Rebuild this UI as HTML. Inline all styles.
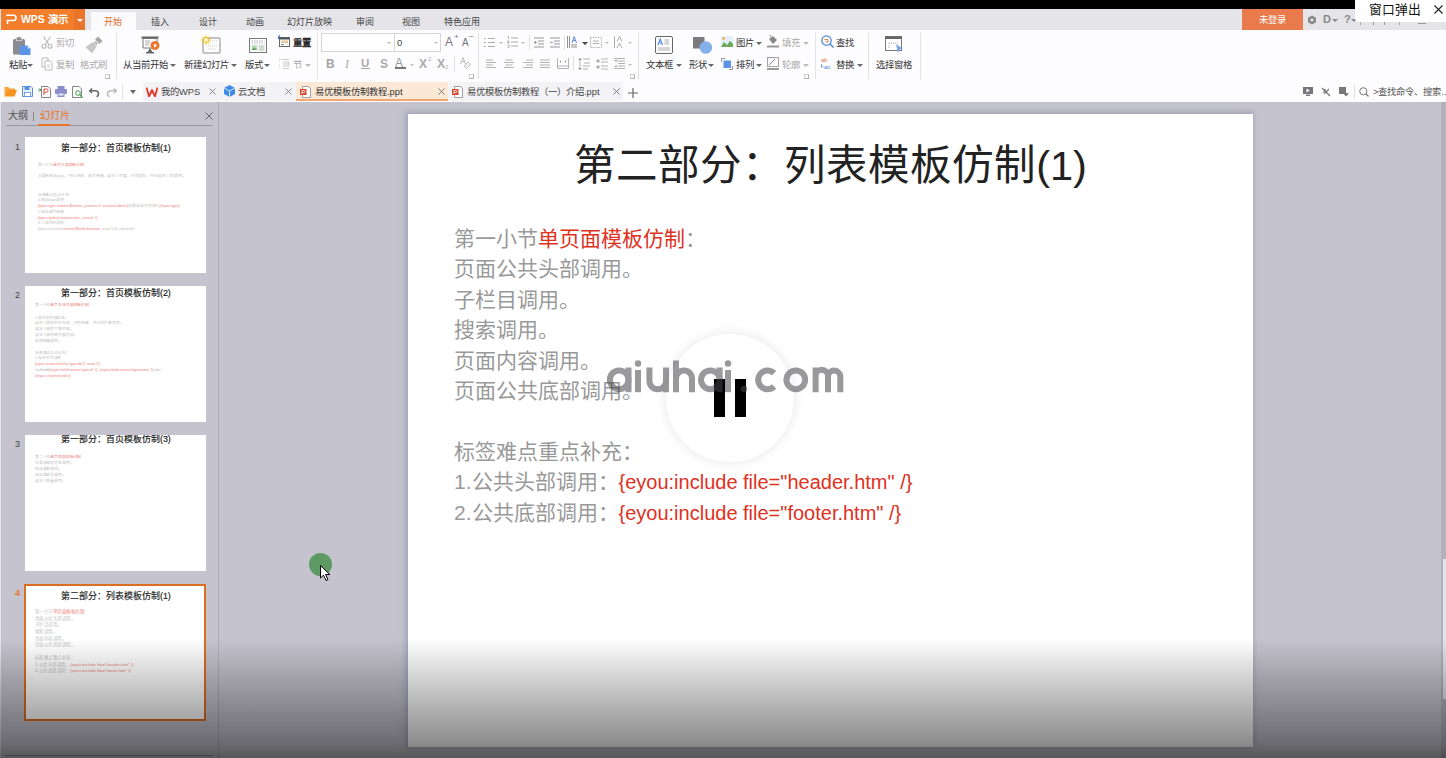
<!DOCTYPE html>
<html lang="zh-CN"><head><meta charset="utf-8">
<style>
*{margin:0;padding:0;box-sizing:border-box}
html,body{width:1446px;height:758px;overflow:hidden;background:#c5c3cd;font-family:"Liberation Sans",sans-serif;position:relative}
.a{position:absolute}
.t{position:absolute;white-space:nowrap;line-height:1}
#topbar{left:0;top:0;width:1446px;height:9px;background:#000}
#tabrow{left:0;top:9px;width:1446px;height:21px;background:#e5e4e8}
#ribbon{left:0;top:30px;width:1446px;height:52px;background:#fdfcfe}
#docrow{left:0;top:82px;width:1446px;height:20px;background:#fdfcfe}
.tab{font-size:9px;color:#444;top:18px}
.rt{font-size:9.4px;color:#333}
.dis{color:#aaa}
.sep{position:absolute;width:1px;background:#e2e1e6}
.arr{position:absolute;width:0;height:0;border-left:3px solid transparent;border-right:3px solid transparent;border-top:3px solid #666}
.arr.l{border-top-color:#bbb}
.launch{position:absolute;width:5px;height:5px;border:1px solid #cfcfcf;border-right-color:#b0b0b0;border-bottom-color:#b0b0b0}
.th .ttl{-webkit-text-stroke:0.7px #111}
.th .t:not(.ttl){opacity:.62}
</style></head><body>
<div id="topbar" class="a"></div>
<div id="tabrow" class="a"></div>
<div id="ribbon" class="a"></div>
<div id="docrow" class="a"></div>
<!-- WPS orange button -->
<div class="a" style="left:1px;top:9px;width:73px;height:21px;background:#f27d2a"></div>
<div class="a" style="left:74px;top:9px;width:11px;height:21px;background:#e8752a"></div>
<svg class="a" style="left:5px;top:14px" width="12" height="11" viewBox="0 0 12 11"><path d="M1 1.2H8.5Q11 1.2 11 4Q11 6.5 8.5 6.5H2.5V10" fill="none" stroke="#fff" stroke-width="1.6"/></svg>
<div class="t" style="left:21px;top:14.5px;font-size:10.4px;font-weight:bold;color:#fff">WPS 演示</div>
<div class="arr" style="left:77px;top:19px;border-top-color:#fff;border-left-width:3px;border-right-width:3px"></div>
<!-- active tab -->
<div class="a" style="left:91px;top:12px;width:45px;height:18px;background:#fbfbfd"></div>
<div class="t tab" style="left:104px;color:#e2691f">开始</div>
<div class="t tab" style="left:151px">插入</div>
<div class="t tab" style="left:199px">设计</div>
<div class="t tab" style="left:246px">动画</div>
<div class="t tab" style="left:287px">幻灯片放映</div>
<div class="t tab" style="left:356px">审阅</div>
<div class="t tab" style="left:402px">视图</div>
<div class="t tab" style="left:444px">特色应用</div>
<!-- right side -->
<div class="a" style="left:1242px;top:9px;width:61px;height:21px;background:#e97a4c"></div>
<div class="t" style="left:1259px;top:15.5px;font-size:9.3px;color:#fff">未登录</div>
<svg class="a" style="left:1307px;top:15px" width="10" height="10" viewBox="0 0 10 10"><path d="M5 0.5L9 2.7V7.3L5 9.5L1 7.3V2.7Z" fill="#888"/><circle cx="5" cy="5" r="1.6" fill="#e5e4e8"/></svg>
<div class="t" style="left:1323px;top:14px;font-size:11px;font-weight:bold;color:#888">D</div>
<div class="arr" style="left:1332px;top:19px;border-top-color:#888"></div>
<div class="t" style="left:1344px;top:14px;font-size:11px;font-weight:bold;color:#888">?</div>
<div class="arr" style="left:1351px;top:19px;border-top-color:#888"></div>
<!-- remnant -->
<div class="a" style="left:1360px;top:22px;width:1px;height:3px;background:#aaa"></div><div class="a" style="left:1373px;top:21px;width:12px;height:4px;border:1px solid #999;border-bottom:none"></div><div class="a" style="left:1399px;top:22px;width:1px;height:3px;background:#aaa"></div><div class="a" style="left:1418px;top:23px;width:8px;height:1px;background:#999"></div>
<!-- popup -->
<div class="a" style="left:1355px;top:0;width:91px;height:22px;background:#fff;border-bottom-left-radius:4px"></div>
<div class="t" style="left:1369px;top:3.5px;font-size:12.8px;color:#111">窗口弹出</div>
<svg class="a" style="left:1434px;top:5px" width="9" height="9" viewBox="0 0 9 9"><path d="M0.5 0.5L8.5 8.5M8.5 0.5L0.5 8.5" stroke="#222" stroke-width="1.1"/></svg>
<!-- group clipboard -->
<svg class="a" style="left:12px;top:36px" width="20" height="20" viewBox="0 0 20 20">
<path d="M1 4.5Q1 3 2.5 3H4V5H10V3H11.5Q13 3 13 4.5V18.5H1Z" fill="#8c8c90"/><path d="M4.5 1.5H6L7 0.5L8 1.5H9.5V4.5H4.5Z" fill="#8c8c90"/>
<path d="M7.5 9.5H15.5L18.5 12.5V19H7.5Z" fill="#5b94e6"/><path d="M15.5 9.5V12.5H18.5Z" fill="#d0e0f8"/></svg>
<div class="t rt" style="left:9px;top:60px">粘贴</div><div class="arr" style="left:27px;top:64px"></div>
<svg class="a" style="left:41px;top:36px" width="12" height="13" viewBox="0 0 12 13"><path d="M2.5 0.5L8 9M9.5 0.5L4 9" stroke="#bbb" stroke-width="1.1" fill="none"/><circle cx="3" cy="10.3" r="2" fill="none" stroke="#bbb" stroke-width="1.1"/><circle cx="9" cy="10.3" r="2" fill="none" stroke="#bbb" stroke-width="1.1"/></svg>
<div class="t rt dis" style="left:56px;top:38px">剪切</div>
<svg class="a" style="left:41px;top:57px" width="12" height="14" viewBox="0 0 12 14"><path d="M1 1H7V10H1Z" fill="none" stroke="#bbb" stroke-width="1"/><path d="M4 4H9L11 6V13H4Z" fill="#fff" stroke="#bbb" stroke-width="1"/><path d="M6 8H9M6 10H9" stroke="#bbb" stroke-width="0.8"/></svg>
<div class="t rt dis" style="left:56px;top:60px">复制</div>
<svg class="a" style="left:85px;top:36px" width="18" height="18" viewBox="0 0 18 18"><path d="M13 0.5L17.5 5L14.5 8L10 3.5Z" fill="#a8a8a8"/><path d="M10.5 5L13 7.5L11.5 9L9 6.5Z" fill="#b5b5b5"/><path d="M8 6L12 10L7 17.5L0.5 11Z" fill="#c6c6c6"/></svg>
<div class="t rt dis" style="left:80px;top:60px">格式刷</div>
<div class="launch" style="left:105px;top:74px"></div>
<div class="sep" style="left:116px;top:33px;height:46px"></div>
<!-- group slides -->
<svg class="a" style="left:141px;top:36px" width="20" height="19" viewBox="0 0 20 19"><rect x="0.5" y="0.5" width="17" height="2" fill="#666"/><path d="M2 2.5H16V12H2Z" fill="#fff" stroke="#777" stroke-width="1"/><path d="M4 5H9M4 7H9M4 9H8" stroke="#999" stroke-width="0.8"/><path d="M9 12L6 17H12L9 12" fill="#666"/><rect x="5" y="16" width="8" height="1.5" fill="#666"/><circle cx="14" cy="9.5" r="4.5" fill="#ec7a33"/><path d="M13 7.5L16 9.5L13 11.5Z" fill="#fff"/></svg>
<div class="t rt" style="left:123px;top:60px">从当前开始</div><div class="arr" style="left:170px;top:64px"></div>
<svg class="a" style="left:201px;top:35px" width="20" height="19" viewBox="0 0 20 19"><rect x="2" y="3" width="17" height="15" rx="1" fill="#fff" stroke="#888" stroke-width="1"/><path d="M9 6H17M5 11H17M7 14H15" stroke="#bbb" stroke-width="0.8" stroke-dasharray="1 1"/><circle cx="5" cy="5" r="3" fill="#f6c21c"/><path d="M5 0V10M0 5H10M1.5 1.5L8.5 8.5M8.5 1.5L1.5 8.5" stroke="#f6c21c" stroke-width="0.9"/><circle cx="5" cy="5" r="2" fill="#fff8d0"/></svg>
<div class="t rt" style="left:184px;top:60px">新建幻灯片</div><div class="arr" style="left:231px;top:64px"></div>
<svg class="a" style="left:249px;top:38px" width="18" height="15" viewBox="0 0 18 15"><rect x="0.5" y="0.5" width="17" height="14" fill="#fff" stroke="#777" stroke-width="1"/><path d="M2.5 3H15.5M2.5 5H15.5" stroke="#999" stroke-width="0.8" stroke-dasharray="1.5 1"/><rect x="2.5" y="7" width="6" height="5" fill="#c5e0c0"/><path d="M2.5 12L5 9L8.5 12Z" fill="#6aa76a"/><path d="M10 8H15.5M10 10H15.5M10 12H15.5" stroke="#999" stroke-width="0.8"/></svg>
<div class="t rt" style="left:245px;top:60px">版式</div><div class="arr" style="left:264px;top:64px"></div>
<svg class="a" style="left:278px;top:35px" width="12" height="12" viewBox="0 0 12 12"><rect x="1.5" y="2.5" width="10" height="9" fill="#fff" stroke="#666" stroke-width="1"/><rect x="1.5" y="2.5" width="10" height="2" fill="#555"/><rect x="3" y="5.5" width="7" height="2.5" fill="#e8c9a0"/><path d="M3 9.5H6" stroke="#888"/><path d="M2 0.5Q0 1.5 0.5 4" stroke="#3a78d4" stroke-width="1.2" fill="none"/></svg>
<div class="t rt" style="left:293px;top:38px;color:#222;-webkit-text-stroke:0.3px #222">重置</div>
<svg class="a" style="left:278px;top:58px" width="12" height="12" viewBox="0 0 12 12"><path d="M3 1.5H11M5 6H11M5 10.5H11M1 1.5H2M1 4H2M1 6.5H2M1 9H2" stroke="#ccc" stroke-width="1.2"/><path d="M5 4H11V8H5" fill="none" stroke="#ccc" stroke-width="1"/></svg>
<div class="t rt dis" style="left:293px;top:60px">节</div><div class="arr l" style="left:305px;top:64px"></div>
<div class="sep" style="left:317px;top:33px;height:46px"></div>
<!-- group font -->
<div class="a" style="left:321px;top:33px;width:74px;height:19px;border:1px solid #d6d5da;background:#fff"></div>
<div class="a" style="left:394px;top:33px;width:47px;height:19px;border:1px solid #d6d5da;background:#fff"></div>
<div class="arr l" style="left:387px;top:42px;border-left-width:2.5px;border-right-width:2.5px;border-top-width:2.5px"></div>
<div class="arr l" style="left:434px;top:42px;border-left-width:2.5px;border-right-width:2.5px;border-top-width:2.5px"></div>
<div class="t" style="left:397px;top:38px;font-size:9.5px;color:#444">0</div>
<div class="t" style="left:445px;top:36px;font-size:12px;color:#777">A</div><div class="t" style="left:454px;top:33px;font-size:8px;color:#777">+</div>
<div class="t" style="left:462px;top:38px;font-size:10px;color:#777">A</div><div class="t" style="left:469px;top:33px;font-size:8px;color:#777">−</div>
<div class="t" style="left:326px;top:58px;font-size:12px;font-weight:bold;color:#a5a5a5">B</div>
<div class="t" style="left:345px;top:58px;font-size:12px;font-style:italic;color:#aaa;font-family:'Liberation Serif',serif">I</div>
<div class="t" style="left:361px;top:58px;font-size:11.5px;font-weight:bold;color:#aaa">U</div><div class="a" style="left:361px;top:68px;width:9px;height:1px;background:#aaa"></div>
<div class="t" style="left:380px;top:58px;font-size:12px;font-weight:bold;color:#aaa">S</div>
<div class="t" style="left:395px;top:57px;font-size:12px;color:#999">A</div><div class="a" style="left:395px;top:67px;width:11px;height:2px;background:#777"></div>
<div class="arr l" style="left:410px;top:64px;border-left-width:2.5px;border-right-width:2.5px;border-top-width:2.5px"></div>
<div class="t" style="left:419px;top:58px;font-size:12px;font-weight:bold;color:#aaa">X</div><div class="t" style="left:428px;top:56px;font-size:6px;color:#aaa">2</div>
<div class="t" style="left:437px;top:58px;font-size:12px;font-weight:bold;color:#aaa">X</div><div class="t" style="left:445px;top:64px;font-size:6px;color:#aaa">2</div>
<div class="sep" style="left:454px;top:56px;height:15px"></div>
<svg class="a" style="left:460px;top:57px" width="11" height="12" viewBox="0 0 11 12"><path d="M0.5 7L3 0.5L5.5 7M1.5 4.5H4.5" stroke="#bbb" fill="none" stroke-width="1"/><path d="M4 9L8 5L10.5 7.5L6.5 11.5Z" fill="#eee" stroke="#bbb" stroke-width="0.8"/></svg>
<div class="launch" style="left:469px;top:74px"></div>
<div class="sep" style="left:478px;top:33px;height:46px"></div>
<!-- paragraph group row1 -->
<svg class="a" style="left:484px;top:37px" width="11" height="11" viewBox="0 0 11 11"><path d="M0 1.5H1.5M0 5.5H1.5M0 9.5H1.5" stroke="#999" stroke-width="1.2"/><path d="M4 1.5H11M4 5.5H11M4 9.5H11" stroke="#aaa" stroke-width="1"/></svg>
<div class="arr l" style="left:499px;top:42px;border-left-width:2.5px;border-right-width:2.5px;border-top-width:2.5px"></div>
<svg class="a" style="left:507px;top:36px" width="11" height="12" viewBox="0 0 11 12"><path d="M0.5 0.5H1.5V3M0.5 5H2V6H0.5V7H2M0.5 9H2V11.5H0.5" stroke="#999" stroke-width="0.7" fill="none"/><path d="M4 2H11M4 6H11M4 10H11" stroke="#aaa" stroke-width="1"/></svg>
<div class="arr l" style="left:521px;top:42px;border-left-width:2.5px;border-right-width:2.5px;border-top-width:2.5px"></div>
<div class="sep" style="left:529px;top:35px;height:15px"></div>
<svg class="a" style="left:534px;top:37px" width="10" height="11" viewBox="0 0 10 11"><path d="M0 1H10M4 4H10M4 7H10M0 10H10" stroke="#999" stroke-width="1"/><path d="M0 5.5H3M1.5 4V7" stroke="#999" stroke-width="1"/></svg>
<svg class="a" style="left:550px;top:37px" width="10" height="11" viewBox="0 0 10 11"><path d="M0 1H10M4 4H10M4 7H10M0 10H10" stroke="#999" stroke-width="1"/><path d="M0 5.5H3" stroke="#999" stroke-width="1"/></svg>
<div class="sep" style="left:564px;top:35px;height:15px"></div>
<svg class="a" style="left:567px;top:36px" width="13" height="13" viewBox="0 0 13 13"><path d="M0.5 0V12M2.5 0V12M5 8V12M7 8V12M9 8V12" stroke="#888" stroke-width="0.9"/><path d="M5 7L7.2 0.5L9.5 7M6 4.5H8.5" stroke="#5b8ee0" stroke-width="1" fill="none"/></svg>
<div class="arr" style="left:582px;top:42px;border-top-color:#444"></div>
<svg class="a" style="left:590px;top:37px" width="12" height="11" viewBox="0 0 12 11"><rect x="0.5" y="0.5" width="11" height="10" fill="none" stroke="#aaa" stroke-width="0.9" stroke-dasharray="1.5 1"/><path d="M3 4H9M3 6.5H9" stroke="#aaa" stroke-width="0.9"/></svg>
<div class="arr l" style="left:605px;top:42px;border-left-width:2.5px;border-right-width:2.5px;border-top-width:2.5px"></div>
<svg class="a" style="left:614px;top:36px" width="11" height="13" viewBox="0 0 11 13"><path d="M0.5 0.5V12" stroke="#aaa" stroke-width="1"/><path d="M3 5.5L5.5 0.5L8 5.5M3 12L5.5 7L8 12" stroke="#aaa" stroke-width="1" fill="none"/></svg>
<div class="arr l" style="left:628px;top:42px;border-left-width:2.5px;border-right-width:2.5px;border-top-width:2.5px"></div>
<!-- row2 -->
<svg class="a" style="left:486px;top:59px" width="10" height="9" viewBox="0 0 10 9"><path d="M0 1H7M0 3.5H10M0 6H7M0 8.5H10" stroke="#aaa" stroke-width="0.9"/></svg>
<svg class="a" style="left:504px;top:59px" width="10" height="9" viewBox="0 0 10 9"><path d="M1.5 1H8.5M0 3.5H10M1.5 6H8.5M0 8.5H10" stroke="#aaa" stroke-width="0.9"/></svg>
<svg class="a" style="left:523px;top:59px" width="10" height="9" viewBox="0 0 10 9"><path d="M3 1H10M0 3.5H10M3 6H10M0 8.5H10" stroke="#aaa" stroke-width="0.9"/></svg>
<svg class="a" style="left:540px;top:59px" width="10" height="9" viewBox="0 0 10 9"><path d="M0 1H10M0 3.5H10M0 6H10M0 8.5H10" stroke="#aaa" stroke-width="0.9"/></svg>
<svg class="a" style="left:557px;top:58px" width="12" height="11" viewBox="0 0 12 11"><path d="M0.5 0V10.5H11.5V0M0.5 8H11.5" stroke="#aaa" stroke-width="0.9" fill="none"/><path d="M2.5 3.5L4 2V5ZM9.5 3.5L8 2V5Z" fill="#999"/></svg>
<div class="sep" style="left:573px;top:56px;height:15px"></div>
<svg class="a" style="left:578px;top:58px" width="12" height="12" viewBox="0 0 12 12"><path d="M5 1H12M6 5H12M5 8H12M5 11H10" stroke="#aaa" stroke-width="0.9"/><path d="M0 2L2 0L4 2M0 10L2 12L4 10" fill="#999"/><path d="M2 0V12" stroke="#999" stroke-width="0.7"/></svg>
<svg class="a" style="left:596px;top:58px" width="12" height="12" viewBox="0 0 12 12"><path d="M5 1H12M5 4H12M5 8H12M5 11H12" stroke="#aaa" stroke-width="0.9"/><path d="M0 3H4M2 1V5M0 9H4M2 7V11" stroke="#999" stroke-width="1"/></svg>
<svg class="a" style="left:614px;top:58px" width="11" height="11" viewBox="0 0 11 11"><path d="M0 0.5H11M4 3H11M4 5.5H11M4 8H11M0 10.5H11" stroke="#aaa" stroke-width="0.9"/><path d="M0.5 2H3.5L2 4ZM0.5 9H3.5L2 7Z" fill="#999"/></svg>
<div class="arr l" style="left:628px;top:64px;border-left-width:2.5px;border-right-width:2.5px;border-top-width:2.5px"></div>
<div class="launch" style="left:630px;top:74px"></div>
<div class="sep" style="left:638px;top:33px;height:46px"></div>
<!-- insert group -->
<svg class="a" style="left:655px;top:36px" width="18" height="19" viewBox="0 0 18 19"><rect x="0.5" y="0.5" width="17" height="17" rx="1.5" fill="#fff" stroke="#666" stroke-width="1"/><path d="M3 9L5.2 3L7.5 9M3.8 7H6.6" stroke="#5b8ee0" stroke-width="1.2" fill="none"/><path d="M9.5 4H14M9.5 6H14M9.5 8H14M3 12H15M3 14H15" stroke="#999" stroke-width="0.8"/></svg>
<div class="t rt" style="left:646px;top:60px">文本框</div><div class="arr" style="left:676px;top:64px"></div>
<svg class="a" style="left:693px;top:37px" width="20" height="19" viewBox="0 0 20 19"><rect x="0" y="0" width="11.5" height="11.5" fill="#7b7b7f"/><circle cx="12.8" cy="10.5" r="6.3" fill="#86b0ec"/></svg>
<div class="t rt" style="left:689px;top:60px">形状</div><div class="arr" style="left:708px;top:64px"></div>
<svg class="a" style="left:721px;top:36px" width="12" height="11" viewBox="0 0 12 11"><rect x="0" y="0" width="12" height="11" fill="#e4eef8"/><path d="M0 11L3 6L6 9L9 5L12 8V11Z" fill="#6aa85a"/><circle cx="2.5" cy="2.5" r="1.3" fill="#f0a040"/></svg>
<div class="t rt" style="left:736px;top:38px">图片</div><div class="arr" style="left:756px;top:42px"></div>
<svg class="a" style="left:721px;top:58px" width="12" height="12" viewBox="0 0 12 12"><path d="M0.5 4V0.5H4M11.5 8V11.5H8" stroke="#888" stroke-width="0.9" fill="none"/><rect x="2.5" y="2.5" width="7.5" height="7.5" fill="#5b94e6"/></svg>
<div class="t rt" style="left:736px;top:60px">排列</div><div class="arr" style="left:756px;top:64px"></div>
<svg class="a" style="left:767px;top:35px" width="12" height="13" viewBox="0 0 12 13"><path d="M2 4L6 1L10 5L6 9Z" fill="#888"/><path d="M4 2L3 0" stroke="#888"/><rect x="0" y="10.5" width="12" height="2" fill="#999"/></svg>
<div class="t rt dis" style="left:782px;top:38px">填充</div><div class="arr l" style="left:803px;top:42px"></div>
<svg class="a" style="left:767px;top:57px" width="12" height="13" viewBox="0 0 12 13"><rect x="0.5" y="0.5" width="11" height="9" fill="none" stroke="#999" stroke-width="0.9"/><path d="M2 8L8 2" stroke="#888" stroke-width="1"/><rect x="0" y="11" width="12" height="2" fill="#999"/></svg>
<div class="t rt dis" style="left:782px;top:60px">轮廓</div><div class="arr l" style="left:803px;top:64px"></div>
<div class="launch" style="left:804px;top:74px"></div>
<div class="sep" style="left:815px;top:33px;height:46px"></div>
<svg class="a" style="left:821px;top:35px" width="13" height="13" viewBox="0 0 13 13"><circle cx="5.5" cy="5.5" r="4.7" fill="none" stroke="#4a88d8" stroke-width="1.2"/><path d="M9 9L12.5 12.5" stroke="#4a88d8" stroke-width="1.5"/><path d="M3.5 4.5H7V7H4.5" stroke="#e07a30" stroke-width="0.9" fill="none"/></svg>
<div class="t rt" style="left:836px;top:38px">查找</div>
<svg class="a" style="left:821px;top:57px" width="13" height="13" viewBox="0 0 13 13"><text x="0" y="5" font-size="5.5" fill="#e07a30" font-family="Liberation Sans">ab</text><text x="3" y="12" font-size="6" fill="#4a88d8" font-family="Liberation Sans">ac</text><path d="M0.5 7V10H2.5" stroke="#4a88d8" stroke-width="0.8" fill="none"/></svg>
<div class="t rt" style="left:836px;top:60px">替换</div><div class="arr" style="left:857px;top:64px"></div>
<div class="sep" style="left:868px;top:33px;height:46px"></div>
<svg class="a" style="left:885px;top:36px" width="19" height="18" viewBox="0 0 19 18"><rect x="0.5" y="0.5" width="16" height="14" fill="#fff" stroke="#777" stroke-width="1"/><rect x="0.5" y="0.5" width="16" height="2.5" fill="#666"/><path d="M4 7H14M4 7V12" stroke="#999" stroke-width="0.8" stroke-dasharray="1 1"/><path d="M11 8L18 13L14.5 13.5L13 17Z" fill="#7aa2ea"/></svg>
<div class="t rt" style="left:876px;top:60px">选择窗格</div>
<div class="sep" style="left:920px;top:33px;height:46px"></div>
<!-- quick access -->
<svg class="a" style="left:4px;top:86px" width="13" height="11" viewBox="0 0 13 11"><path d="M0.5 1H4.5L5.5 2.5H11V4H3L0.5 10Z" fill="#f6a63a"/><path d="M3 4H13L10.5 10.5H0.5Z" fill="#f7931e"/></svg>
<svg class="a" style="left:22px;top:86px" width="11" height="11" viewBox="0 0 11 11"><path d="M0.5 0.5H9L10.5 2V10.5H0.5Z" fill="#e8f0fc" stroke="#5b8ee0" stroke-width="1"/><rect x="2.5" y="0.5" width="5" height="3.5" fill="#5b8ee0"/><rect x="2.5" y="6.5" width="6" height="4" fill="#fff" stroke="#5b8ee0" stroke-width="0.8"/></svg>
<svg class="a" style="left:38px;top:86px" width="13" height="12" viewBox="0 0 13 12"><path d="M3.5 0.5H10L12.5 3V11.5H3.5Z" fill="#fff" stroke="#777" stroke-width="0.9"/><path d="M6 9V3H8.5Q10 3 10 4.6Q10 6.2 8.5 6.2H6" stroke="#d9452b" stroke-width="1" fill="none"/><path d="M0 4H3M1.5 2.5L3 4L1.5 5.5" stroke="#3aa34a" stroke-width="1" fill="none"/></svg>
<svg class="a" style="left:55px;top:86px" width="12" height="11" viewBox="0 0 12 11"><rect x="2.5" y="0" width="7" height="3" fill="#8a8fcc"/><rect x="0" y="3" width="12" height="5" rx="1" fill="#8a8fcc"/><rect x="2.5" y="7" width="7" height="4" fill="#8a8fcc"/><rect x="3.5" y="7.5" width="5" height="2" fill="#e8e8f5"/></svg>
<svg class="a" style="left:72px;top:86px" width="12" height="12" viewBox="0 0 12 12"><path d="M0.5 0.5H7L9.5 3V11.5H0.5Z" fill="#fff" stroke="#777" stroke-width="0.9"/><circle cx="6" cy="7" r="2.3" fill="none" stroke="#3aa34a" stroke-width="1"/><path d="M7.7 8.7L10.5 11.5" stroke="#3aa34a" stroke-width="1.2"/></svg>
<svg class="a" style="left:89px;top:87px" width="11" height="10" viewBox="0 0 11 10"><path d="M3 1.5L0.8 3.8L3 6" stroke="#666" stroke-width="1.6" fill="none"/><path d="M1 3.8H6Q9.5 3.8 9.5 6.8Q9.5 9 7.5 9.8" stroke="#666" stroke-width="1.6" fill="none"/></svg>
<svg class="a" style="left:106px;top:87px" width="11" height="10" viewBox="0 0 11 10"><path d="M8 1.5L10.2 3.8L8 6" stroke="#bbb" stroke-width="1.6" fill="none"/><path d="M10 3.8H5Q1.5 3.8 1.5 6.8Q1.5 9 3.5 9.8" stroke="#bbb" stroke-width="1.6" fill="none"/></svg>
<div class="sep" style="left:122px;top:84px;height:16px;background:#e4e3e8"></div>
<div class="arr" style="left:130px;top:90px;border-left-width:3.5px;border-right-width:3.5px;border-top-width:4px;border-top-color:#666"></div>
<!-- tab 1 -->
<div class="a" style="left:143px;top:82px;width:76px;height:19px;background:#f3f2f5"></div>
<svg class="a" style="left:146px;top:87px" width="12" height="10" viewBox="0 0 12 10"><path d="M0.5 0.5L3 9.5L6 3L9 9.5L11.5 0.5" stroke="#e2392a" stroke-width="1.8" fill="none" stroke-linejoin="round"/></svg>
<div class="t" style="left:161px;top:88px;font-size:9.3px;color:#444">我的WPS</div>
<svg class="a" style="left:209px;top:88px" width="7" height="7" viewBox="0 0 7 7"><path d="M0.5 0.5L6.5 6.5M6.5 0.5L0.5 6.5" stroke="#888" stroke-width="1"/></svg>
<!-- tab 2 -->
<div class="a" style="left:219px;top:82px;width:77px;height:19px;background:#f3f2f5"></div>
<svg class="a" style="left:224px;top:85px" width="11" height="12" viewBox="0 0 11 12"><path d="M5.5 0L11 3V9L5.5 12L0 9V3Z" fill="#3d8be6"/><path d="M0 3L5.5 6L11 3M5.5 6V12" stroke="#fff" stroke-width="0.8" fill="none"/></svg>
<div class="t" style="left:238px;top:88px;font-size:9.3px;color:#444">云文档</div>
<svg class="a" style="left:285px;top:88px" width="7" height="7" viewBox="0 0 7 7"><path d="M0.5 0.5L6.5 6.5M6.5 0.5L0.5 6.5" stroke="#888" stroke-width="1"/></svg>
<!-- tab 3 active -->
<div class="a" style="left:296px;top:82px;width:152px;height:19px;background:#fbe8d6"></div>
<div class="a" style="left:296px;top:99px;width:152px;height:2px;background:#f2a670"></div>
<svg class="a" style="left:300px;top:86px" width="11" height="12" viewBox="0 0 11 12"><path d="M2.5 0.5H8.5L10.5 2.5V11.5H2.5Z" fill="#fff" stroke="#888" stroke-width="0.8"/><rect x="0" y="3" width="6.5" height="6" fill="#d6482a"/><path d="M2 8V4.5H3.8Q4.8 4.5 4.8 5.5Q4.8 6.5 3.8 6.5H2" stroke="#fff" stroke-width="0.8" fill="none"/></svg>
<div class="t" style="left:315px;top:88px;font-size:9.3px;color:#333">易优模板仿制教程.ppt</div>
<svg class="a" style="left:438px;top:88px" width="7" height="7" viewBox="0 0 7 7"><path d="M0.5 0.5L6.5 6.5M6.5 0.5L0.5 6.5" stroke="#777" stroke-width="1"/></svg>
<!-- tab 4 -->
<div class="a" style="left:448px;top:82px;width:175px;height:19px;background:#f3f2f5"></div>
<svg class="a" style="left:452px;top:86px" width="11" height="12" viewBox="0 0 11 12"><path d="M2.5 0.5H8.5L10.5 2.5V11.5H2.5Z" fill="#fff" stroke="#888" stroke-width="0.8"/><rect x="0" y="3" width="6.5" height="6" fill="#d6482a"/><path d="M2 8V4.5H3.8Q4.8 4.5 4.8 5.5Q4.8 6.5 3.8 6.5H2" stroke="#fff" stroke-width="0.8" fill="none"/></svg>
<div class="t" style="left:467px;top:88px;font-size:9.3px;color:#444">易优模板仿制教程（一）介绍.ppt</div>
<svg class="a" style="left:613px;top:88px" width="7" height="7" viewBox="0 0 7 7"><path d="M0.5 0.5L6.5 6.5M6.5 0.5L0.5 6.5" stroke="#777" stroke-width="1"/></svg>
<svg class="a" style="left:628px;top:88px" width="10" height="10" viewBox="0 0 10 10"><path d="M5 0V10M0 5H10" stroke="#666" stroke-width="1.2"/></svg>
<!-- right tools -->
<svg class="a" style="left:1303px;top:87px" width="10" height="9" viewBox="0 0 10 9"><rect x="0" y="0" width="10" height="7" fill="#777"/><path d="M3.5 1.5L7 3.5L3.5 5.5Z" fill="#fff"/><rect x="3" y="7.5" width="4" height="1.5" fill="#777"/></svg>
<svg class="a" style="left:1321px;top:87px" width="10" height="10" viewBox="0 0 10 10"><path d="M1 1L9 9M2 5H6M4 2V7M8 2L5 5" stroke="#777" stroke-width="1.2"/></svg>
<svg class="a" style="left:1339px;top:87px" width="10" height="10" viewBox="0 0 10 10"><rect x="0" y="0" width="7" height="7" fill="#777"/><path d="M4 6H10L7 9.5Z" fill="#777"/></svg>
<div class="sep" style="left:1354px;top:85px;height:13px;background:#ddd"></div>
<svg class="a" style="left:1359px;top:87px" width="10" height="10" viewBox="0 0 10 10"><circle cx="4.3" cy="4.3" r="3.6" fill="none" stroke="#777" stroke-width="1"/><path d="M7 7L9.5 9.5" stroke="#777" stroke-width="1.2"/></svg>
<div class="t" style="left:1373px;top:88px;font-size:9.3px;color:#555">&gt;查找命令、搜索...</div>
<!-- left panel -->
<div class="a" style="left:0;top:102px;width:1px;height:656px;background:#e8e6ee"></div>
<div class="a" style="left:218px;top:102px;width:1px;height:656px;background:#aeabb6"></div>
<div class="t" style="left:8px;top:111px;font-size:10px;color:#555">大纲</div>
<div class="a" style="left:33px;top:112px;width:1px;height:9px;background:#888"></div>
<div class="t" style="left:40px;top:111px;font-size:10px;color:#e8732c">幻灯片</div>
<div class="a" style="left:6px;top:125px;width:207px;height:1px;background:#9a98a2"></div>
<div class="a" style="left:38px;top:124px;width:32px;height:2px;background:#e8732c"></div>
<svg class="a" style="left:205px;top:112px" width="8" height="8" viewBox="0 0 8 8"><path d="M0.5 0.5L7.5 7.5M7.5 0.5L0.5 7.5" stroke="#666" stroke-width="1"/></svg>
<div class="t" style="left:15px;top:143px;font-size:9px;color:#444">1</div>
<div class="t" style="left:15px;top:291px;font-size:9px;color:#444">2</div>
<div class="t" style="left:15px;top:440px;font-size:9px;color:#444">3</div>
<div class="t" style="left:15px;top:589px;font-size:9px;font-weight:bold;color:#e8732c">4</div>
<div class="a" style="left:25px;top:137px;width:181px;height:136px;overflow:hidden"><div class="a th" style="left:0;top:0;width:845px;height:633px;transform:scale(0.2148);transform-origin:0 0;background:#fff"><div class="t ttl" style="left:0;width:845px;text-align:center;top:28px;font-size:41.5px;color:#111">第一部分：首页模板仿制(1)</div><div class="t" style="left:59px;top:120px;font-size:18px"><span style="color:#999999">第一小节</span><span style="color:#e0301e">首页头部模板仿制</span></div><div class="t" style="left:59px;top:173px;font-size:18px"><span style="color:#999999">主要有网站logo，PNG名称，首页链接，自定义页面，栏目导航，PNG自定义的调用。</span></div><div class="t" style="left:59px;top:258px;font-size:18px"><span style="color:#999999">标签难点重点补充：</span></div><div class="t" style="left:59px;top:284px;font-size:18px"><span style="color:#999999">1.网站logo调用</span></div><div class="t" style="left:59px;top:311px;font-size:18px"><span style="color:#e0301e">{eyou:type name='$theme_params.tt' action='admin'}</span><span style="color:#999999">如果是首页则显示</span><span style="color:#e0301e">{/eyou:type}</span></div><div class="t" style="left:59px;top:339px;font-size:18px"><span style="color:#999999">2.网站首页链接</span></div><div class="t" style="left:59px;top:366px;font-size:18px"><span style="color:#e0301e">{eyou:global name='web_cmsurl' /}</span></div><div class="t" style="left:59px;top:391px;font-size:18px"><span style="color:#999999">3.二级栏目导航</span></div><div class="t" style="left:59px;top:419px;font-size:18px"><span style="color:#999999">{eyou:channel </span><span style="color:#e0301e">name='$field.dirname'</span><span style="color:#999999"> row='100' id='field'}</span></div></div></div>
<div class="a" style="left:25px;top:286px;width:181px;height:136px;overflow:hidden"><div class="a th" style="left:0;top:0;width:845px;height:633px;transform:scale(0.2148);transform-origin:0 0;background:#fff"><div class="t ttl" style="left:0;width:845px;text-align:center;top:10px;font-size:41.5px;color:#111">第一部分：首页模板仿制(2)</div><div class="t" style="left:46px;top:80px;font-size:18px"><span style="color:#999999">第一小节</span><span style="color:#e0301e">首页主体内容模板仿制</span></div><div class="t" style="left:46px;top:138px;font-size:18px"><span style="color:#999999">1.首页的内容区域。</span></div><div class="t" style="left:46px;top:163px;font-size:18px"><span style="color:#999999">自定义调用栏目名称，栏目链接，栏目的文章列表。</span></div><div class="t" style="left:46px;top:190px;font-size:18px"><span style="color:#999999">自定义调用文章内容。</span></div><div class="t" style="left:46px;top:218px;font-size:18px"><span style="color:#999999">自定义调用单页面内容。</span></div><div class="t" style="left:46px;top:245px;font-size:18px"><span style="color:#999999">友情链接调用。</span></div><div class="t" style="left:46px;top:300px;font-size:18px"><span style="color:#999999">标签难点重点补充：</span></div><div class="t" style="left:46px;top:327px;font-size:18px"><span style="color:#999999">1.指定栏目调用</span></div><div class="t" style="left:46px;top:355px;font-size:18px"><span style="color:#e0301e">{eyou:channelartlist typeid='1' row='1'}</span></div><div class="t" style="left:46px;top:383px;font-size:18px"><span style="color:#666">&lt;a href='</span><span style="color:#e0301e">{eyou:field name='typeurl' /}</span><span style="color:#666">'&gt;</span><span style="color:#e0301e">{eyou:field name='typename' /}</span><span style="color:#666">&lt;/a&gt;</span></div><div class="t" style="left:46px;top:409px;font-size:18px"><span style="color:#e0301e">{/eyou:channelartlist}</span></div></div></div>
<div class="a" style="left:25px;top:435px;width:181px;height:136px;overflow:hidden"><div class="a th" style="left:0;top:0;width:845px;height:633px;transform:scale(0.2148);transform-origin:0 0;background:#fff"><div class="t ttl" style="left:0;width:845px;text-align:center;top:-3px;font-size:41.5px;color:#111">第一部分：首页模板仿制(3)</div><div class="t" style="left:46px;top:92px;font-size:18px"><span style="color:#999999">第二小节</span><span style="color:#e0301e">首页底部模板仿制</span></div><div class="t" style="left:46px;top:120px;font-size:18px"><span style="color:#999999">主要有版权信息调用。</span></div><div class="t" style="left:46px;top:147px;font-size:18px"><span style="color:#999999">网站备案调用。</span></div><div class="t" style="left:46px;top:175px;font-size:18px"><span style="color:#999999">网站备案号调用。</span></div><div class="t" style="left:46px;top:203px;font-size:18px"><span style="color:#999999">自定义变量调用。</span></div></div></div>
<div class="a" style="left:25px;top:585px;width:180px;height:135px;overflow:hidden"><div class="a th" style="left:0;top:0;width:845px;height:633px;transform:scale(0.2148);transform-origin:0 0;background:#fff"><div class="t ttl" style="left:0;width:845px;text-align:center;top:31px;font-size:41.5px;color:#222">第二部分：列表模板仿制(1)</div><div class="t" style="left:46px;top:114.0px;font-size:21px"><span style="color:#999999">第一小节</span><span style="color:#e0301e">单页面模板仿制</span><span style="color:#999999">：</span></div><div class="t" style="left:46px;top:144.4px;font-size:21px"><span style="color:#999999">页面公共头部调用。</span></div><div class="t" style="left:46px;top:174.8px;font-size:21px"><span style="color:#999999">子栏目调用。</span></div><div class="t" style="left:46px;top:205.2px;font-size:21px"><span style="color:#999999">搜索调用。</span></div><div class="t" style="left:46px;top:235.6px;font-size:21px"><span style="color:#999999">页面内容调用。</span></div><div class="t" style="left:46px;top:266.0px;font-size:21px"><span style="color:#999999">页面公共底部调用。</span></div><div class="t" style="left:46px;top:326.8px;font-size:21px"><span style="color:#999999">标签难点重点补充：</span></div><div class="t" style="left:46px;top:357.2px;font-size:21px"><span style="color:#999999">1.公共头部调用：</span><span style="color:#e0301e"><span style="font-size:20px">{eyou:include file="header.htm" /}</span></span></div><div class="t" style="left:46px;top:387.6px;font-size:21px"><span style="color:#999999">2.公共底部调用：</span><span style="color:#e0301e"><span style="font-size:20px">{eyou:include file="footer.htm" /}</span></span></div></div></div>
<div class="a" style="left:24px;top:584px;width:182px;height:137px;border:2px solid #dc6e22"></div>
<div class="a" style="left:5px;top:755px;width:208px;height:1px;background:#8d8b93"></div>
<!-- main slide -->
<div class="a" style="left:408px;top:114px;width:845px;height:633px;box-shadow:-1px -1px 6px 1px rgba(120,130,165,0.55)"></div>
<div id="slide" class="a" style="left:408px;top:114px;width:845px;height:633px;background:#fff"><div class="t ttl" style="left:0;width:845px;text-align:center;top:31px;font-size:41.5px;color:#222">第二部分：列表模板仿制(1)</div><div class="t" style="left:46px;top:114.0px;font-size:21px"><span style="color:#999999">第一小节</span><span style="color:#e0301e">单页面模板仿制</span><span style="color:#999999">：</span></div><div class="t" style="left:46px;top:144.4px;font-size:21px"><span style="color:#999999">页面公共头部调用。</span></div><div class="t" style="left:46px;top:174.8px;font-size:21px"><span style="color:#999999">子栏目调用。</span></div><div class="t" style="left:46px;top:205.2px;font-size:21px"><span style="color:#999999">搜索调用。</span></div><div class="t" style="left:46px;top:235.6px;font-size:21px"><span style="color:#999999">页面内容调用。</span></div><div class="t" style="left:46px;top:266.0px;font-size:21px"><span style="color:#999999">页面公共底部调用。</span></div><div class="t" style="left:46px;top:326.8px;font-size:21px"><span style="color:#999999">标签难点重点补充：</span></div><div class="t" style="left:46px;top:357.2px;font-size:21px"><span style="color:#999999">1.公共头部调用：</span><span style="color:#e0301e"><span style="font-size:20px">{eyou:include file="header.htm" /}</span></span></div><div class="t" style="left:46px;top:387.6px;font-size:21px"><span style="color:#999999">2.公共底部调用：</span><span style="color:#e0301e"><span style="font-size:20px">{eyou:include file="footer.htm" /}</span></span></div></div>
<!-- scrollbar -->
<div class="a" style="left:1441px;top:102px;width:5px;height:656px;background:#b3b0bb"></div>
<div class="a" style="left:1443px;top:559px;width:3px;height:140px;background:#e4e3e8"></div>
<!-- cursor -->
<div class="a" style="left:309px;top:553px;width:23px;height:23px;border-radius:50%;background:#5e9a64"></div>
<svg class="a" style="left:320px;top:565px" width="11" height="17" viewBox="0 0 11 17"><path d="M0.5 0.5V13L3.5 10.2L6 15.5L8 14.6L5.6 9.5H9.8Z" fill="#fff" stroke="#000" stroke-width="1"/></svg>
<!-- bottom gradient -->
<div class="a" style="left:0;top:638px;width:1446px;height:120px;background:linear-gradient(rgba(0,0,0,0),rgba(0,0,0,0.04) 8%,rgba(0,0,0,0.21) 40%,rgba(0,0,0,0.45) 88%,rgba(0,0,0,0.56))"></div>
<!-- pause circle -->
<div class="a" style="left:666px;top:334px;width:128px;height:128px;border-radius:50%;background:#fff;box-shadow:0 0 12px 1px rgba(0,0,0,0.09)"></div>
<div class="a" style="left:714px;top:379px;width:11px;height:38px;background:#000"></div>
<div class="a" style="left:735px;top:379px;width:11px;height:38px;background:#000"></div>
<!-- watermark -->
<svg class="a" style="left:600px;top:355px;opacity:0.55" width="250" height="45" viewBox="0 0 250 45">
<g fill="none" stroke="rgb(70,68,74)" stroke-width="6">
<circle cx="19.2" cy="24.85" r="9.35"/><path d="M28.5 12.5V37.2"/>
<path d="M38 15V37.2"/>
<path d="M49.4 12.5V26A8.3 8.3 0 0 0 66 26V12.5M66 20V37.2"/>
<path d="M76 5.6V37.2M76 23.5A8 8 0 0 1 92 23.5V37.2"/>
<circle cx="110.35" cy="24.85" r="9.35"/><path d="M119.6 12.5V37.2"/>
<path d="M128 15V37.2"/>
<path d="M174.1 18.2A9.35 9.35 0 1 0 174.1 31.5"/>
<circle cx="195.8" cy="24.85" r="9.35"/>
<path d="M215.6 12.5V37.2M215.6 21A6.2 6.2 0 0 1 228 21V37.2M228 21A6.2 6.2 0 0 1 240.3 21V37.2"/>
</g>
<g fill="rgb(70,68,74)">
<circle cx="38" cy="8.5" r="3.2"/><circle cx="128" cy="8.5" r="3.2"/><circle cx="144" cy="34" r="3.3"/>
</g>
</svg>
</body></html>
